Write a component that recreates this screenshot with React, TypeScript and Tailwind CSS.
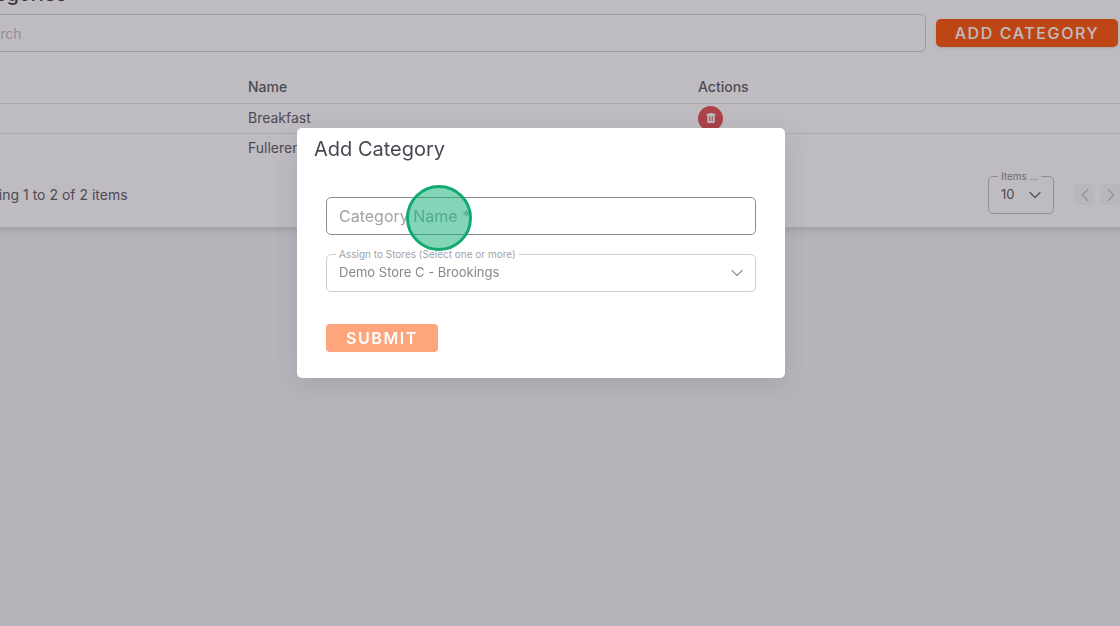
import { useState } from 'react';
import { ChevronDown, ChevronLeft, ChevronRight } from 'lucide-react';

interface Category {
  id: number;
  name: string;
}

const CATEGORIES: Category[] = [
  { id: 1, name: 'Breakfast' },
  { id: 2, name: 'Fullerene' },
];

const STORES = ['Demo Store C - Brookings'];

function TrashIcon() {
  return (
    <svg width="12" height="12" viewBox="0 0 24 24" fill="currentColor" aria-hidden="true">
      <path
        fillRule="evenodd"
        d="M8.500 2v1.500H3V6h1.500v14a2 2 0 0 0 2 2h11a2 2 0 0 0 2-2V6H21V3.500h-5.500V2h-7zM8.500 8.500h2V18h-2V8.500zm5 0h2V18h-2V8.500z"
      />
    </svg>
  );
}

function CategoryTable({ rows }: { rows: Category[] }) {
  return (
    <table className="mt-[19px] w-full table-fixed text-left text-sm text-[#5a5661]">
      <thead>
        <tr className="h-8 border-b border-[#e2e1e6]">
          <th className="w-[270px] px-4 font-medium" />
          <th className="w-[450px] px-4 font-medium">Name</th>
          <th className="px-4 font-medium">Actions</th>
        </tr>
      </thead>
      <tbody>
        {rows.map((row) => (
          <tr key={row.id} className="border-b border-[#e2e1e6] last:border-b-0">
            <td className="px-4 py-[2px]" />
            <td className="px-4 py-[2px]">{row.name}</td>
            <td className="px-4 py-[2px]">
              <button
                type="button"
                aria-label={`Delete ${row.name}`}
                className="flex size-[25px] items-center justify-center rounded-full bg-[#e4494f] text-white"
              >
                <TrashIcon />
              </button>
            </td>
          </tr>
        ))}
      </tbody>
    </table>
  );
}

function CategoriesCard() {
  const [pageSize, setPageSize] = useState('10');

  return (
    <section className="-mx-[38px] -mt-6 bg-white pt-1 pb-[13px] shadow-[0_2px_10px_rgba(58,53,65,0.22)]">
      <h1 className="mb-1.5 text-xl leading-7 font-medium text-[#3a3541]">Categories</h1>
      <div className="flex items-center gap-[10px] pr-10">
        <input
          type="search"
          aria-label="Search"
          placeholder="Search"
          className="h-[38px] min-w-0 flex-1 rounded-[5px] border border-[#cfcdd3] px-3 text-sm text-[#5a5661] placeholder:text-[#bdbbc1]"
        />
        <button
          type="button"
          className="h-7 w-[182px] rounded-[5px] bg-[#ff5000] text-base font-medium tracking-widest whitespace-nowrap text-white uppercase shadow-sm"
        >
          Add Category
        </button>
      </div>

      <CategoryTable rows={CATEGORIES} />

      <div className="mt-[13px] flex items-center pr-[37px]">
        <p className="flex-1 text-sm text-[#5a5661]">Showing 1 to 2 of 2 items</p>
        <div className="relative mr-5">
          <label
            htmlFor="page-size"
            className="absolute -top-2 left-[10px] bg-white px-[3px] text-[10px] leading-4 whitespace-nowrap text-[#88858d]"
          >
            Items ...
          </label>
          <select
            id="page-size"
            value={pageSize}
            onChange={(e) => setPageSize(e.target.value)}
            className="block h-[38px] w-[66px] appearance-none rounded-[5px] border border-[#bcbac0] px-3 text-[13px] text-[#5a5661]"
          >
            <option>10</option>
            <option>25</option>
            <option>50</option>
          </select>
          <ChevronDown
            size={20}
            strokeWidth={1.5}
            className="pointer-events-none absolute top-[9px] right-[9px] text-[#6b6872]"
          />
        </div>
        <div className="flex gap-[5px]">
          <button
            type="button"
            aria-label="Previous page"
            disabled
            className="flex size-[21px] items-center justify-center rounded bg-[#f8f7fa] text-[#c0bec4]"
          >
            <ChevronLeft size={22} strokeWidth={1.5} className="shrink-0" />
          </button>
          <button
            type="button"
            aria-label="Next page"
            disabled
            className="flex size-[21px] items-center justify-center rounded bg-[#f8f7fa] text-[#c0bec4]"
          >
            <ChevronRight size={22} strokeWidth={1.5} className="shrink-0" />
          </button>
        </div>
      </div>
    </section>
  );
}

function AddCategoryDialog() {
  const [name, setName] = useState('');
  const [store, setStore] = useState(STORES[0]);

  return (
    <div
      role="dialog"
      aria-labelledby="dialog-title"
      className="relative w-full max-w-[488px] rounded-[5px] bg-white shadow-[0_8px_24px_rgba(58,53,65,0.14)]"
    >
      <h2 id="dialog-title" className="px-[17px] pt-[7px] text-xl leading-7 text-[#4a4652]">
        Add Category
      </h2>
      <form className="px-[29px] pt-[34px] pb-[26px]" onSubmit={(e) => e.preventDefault()}>
        <div className="relative">
          <input
            type="text"
            aria-label="Category Name"
            placeholder="Category Name *"
            value={name}
            onChange={(e) => setName(e.target.value)}
            className="block h-[38px] w-full rounded-[5px] border border-[#8c8c90] px-3 text-base text-[#5a5661] placeholder:text-[#a3a3a6]"
          />
          {/* Click marker */}
          <span className="pointer-events-none absolute -top-3 left-20 z-10 size-[66px] rounded-full border-3 border-[#12a970] bg-[#05ae70]/50" />
        </div>

        <div className="relative mt-[19px]">
          <label
            htmlFor="stores"
            className="absolute -top-2 left-[10px] bg-white px-[3px] text-[10px] leading-4 text-[#a3a3a6]"
          >
            Assign to Stores (Select one or more)
          </label>
          <select
            id="stores"
            value={store}
            onChange={(e) => setStore(e.target.value)}
            className="block h-[38px] w-full appearance-none rounded-[5px] border border-[#cfcfd2] px-3 text-[13px] text-[#88888c]"
          >
            {STORES.map((s) => (
              <option key={s}>{s}</option>
            ))}
          </select>
          <ChevronDown
            size={20}
            strokeWidth={1.5}
            className="pointer-events-none absolute top-[9px] right-[9px] text-[#98989c]"
          />
        </div>

        <button
          type="submit"
          className="mt-8 block h-7 w-28 rounded bg-[#fea57b] text-base font-semibold tracking-widest text-white uppercase"
        >
          Submit
        </button>
      </form>
    </div>
  );
}

export default function App() {
  return (
    <div className="flow-root min-h-screen overflow-hidden bg-[#f5f5f9] font-['Inter','Liberation_Sans',sans-serif]">
      <CategoriesCard />
      <div className="fixed inset-0 flex items-start justify-center bg-[#3a3541]/33 pt-32 pr-[38px]">
        <AddCategoryDialog />
      </div>
    </div>
  );
}
